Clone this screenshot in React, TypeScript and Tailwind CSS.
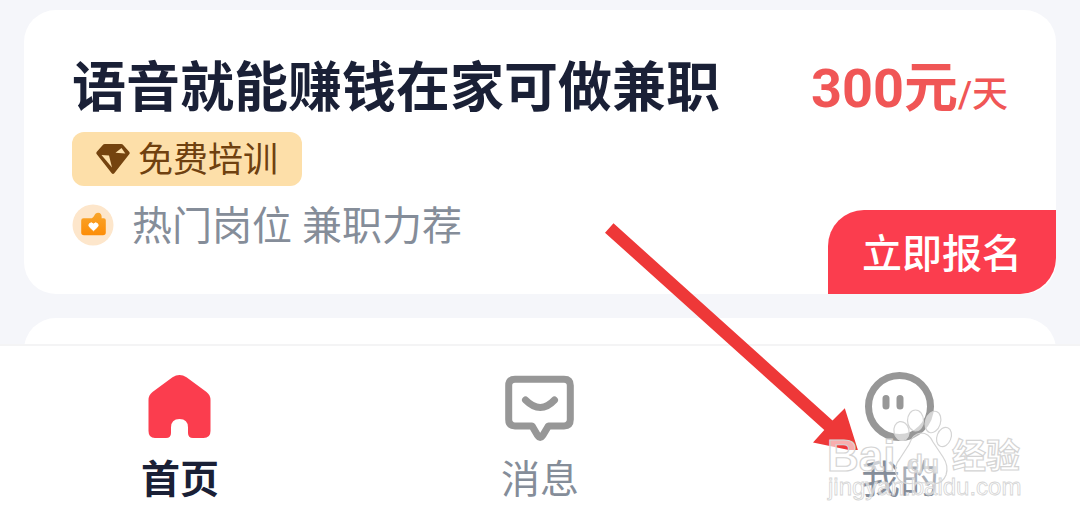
import type { ReactNode } from 'react';
import { clsx } from 'clsx';

const DiamondIcon = () => (
  <svg viewBox="0 0 34 32" className="w-[34px] h-8 shrink-0" aria-hidden="true">
    <path d="M9 1h16q1.500 0 2.400 1.200l5.800 6.500q1 1.300 0 2.600L18.300 30.200q-1.300 1.500-2.600 0L.8 11.300q-1-1.300 0-2.600l5.800-6.500Q7.500 1 9 1z" fill="#74430f" />
    <path d="M5.500 12l7.500.5 3 12z" fill="#fddfa9" />
    <path d="M19.500 9.800l6-4.800 3.800 5.500z" fill="#fddfa9" />
  </svg>
);

const ThumbIcon = () => (
  <svg viewBox="0 0 42 42" className="w-[42px] h-[42px] shrink-0" aria-hidden="true">
    <defs>
      <linearGradient id="thumb" x1="0" y1="0" x2="0" y2="1">
        <stop offset="0" stopColor="#f8a52c" />
        <stop offset="1" stopColor="#fd8d07" />
      </linearGradient>
    </defs>
    <circle cx="21" cy="21" r="20.500" fill="#fde6cb" />
    <path d="M11.500 14.200h8.300q1.400-.6 2.400-2.500 1.200-3 3.900-3 3.600.2 3.600 4.600l-.2.900h2.300q2 0 2 2V28.500q0 2.800-2.800 2.800H12q-2.800 0-2.800-2.800V16.500q0-2.300 2.300-2.300z" fill="url(#thumb)" />
    <path d="M21.500 26.700l-4-3.800q-1.300-1.700-.1-3.200 2-1.900 4.100.3 2.100-2.200 4.100-.3 1.200 1.500-.1 3.200z" fill="#fff" stroke="#fff" strokeLinejoin="round" />
  </svg>
);

const HomeIcon = () => (
  <svg viewBox="0 0 72 72" className="w-[72px] h-[72px]" aria-hidden="true">
    <path
      d="M28.500 7.200q7-4.600 14 0L62.500 22q4 3.200 4 8v31q0 7-7 7H49q-5 0-5-5v-5.500q0-8.500-8.500-8.500t-8.500 8.500V63q0 5-5 5H11q-6.500 0-6.500-7V30q0-5 4-8z"
      fill="#fb3d4e"
    />
  </svg>
);

const MessageIcon = () => (
  <svg viewBox="0 0 72 72" className="w-[72px] h-[72px]" fill="none" stroke="#979797" strokeWidth="7" strokeLinecap="round" strokeLinejoin="round" aria-hidden="true">
    <path d="M11 9.300h49q6.300 0 6.300 6.300v34q0 6.300-6.300 6.300H44.500l-5.700 9.500q-2.600 4-5.200 0L28 55.900H11q-6.300 0-6.300-6.300v-34q0-6.300 6.300-6.300z" />
    <path d="M21.500 30q15 15 29 0" />
  </svg>
);

const MineIcon = () => (
  <svg viewBox="0 0 72 72" className="w-[72px] h-[72px]" fill="none" stroke="#979797" strokeWidth="7" strokeLinecap="round" aria-hidden="true">
    <circle cx="35.500" cy="36.500" r="31" />
    <path d="M22 28.500v7.500M36 28.500v7.500" />
  </svg>
);

const tabs: { label: string; icon: ReactNode; active?: boolean }[] = [
  { label: '首页', icon: <HomeIcon />, active: true },
  { label: '消息', icon: <MessageIcon /> },
  { label: '我的', icon: <MineIcon /> },
];

const JobCard = () => (
  <article className="relative bg-white rounded-[32px] overflow-hidden h-[284px] px-12 pt-10">
    <div className="flex justify-between items-center h-[76px]">
      <h2 className="text-[54px] font-bold text-[#1a2036]">语音就能赚钱在家可做兼职</h2>
      <p className="flex items-baseline font-bold text-[#f05656]">
        <span className="text-[54px]">300元</span>
        <span className="text-4xl font-medium">/天</span>
      </p>
    </div>
    <div className="mt-1.5 flex w-fit items-center gap-2 h-[54px] px-6 rounded-xl bg-[#fddfa9] text-[35px] text-[#6f4110]">
      <DiamondIcon />
      <span className="pt-1">免费培训</span>
    </div>
    <div className="mt-3 flex items-center gap-[18px] h-[54px] text-[40px] text-[#858d99]">
      <ThumbIcon />
      <span className="pt-1">热门岗位 兼职力荐</span>
    </div>
    <button className="absolute right-0 bottom-0 w-[228px] h-[84px] pt-1.5 rounded-tl-[36px] rounded-br-[36px] bg-[#fb3d4e] text-[40px] font-medium text-white">
      立即报名
    </button>
  </article>
);

const Arrow = () => (
  <svg viewBox="0 0 260 230" className="absolute left-[600px] top-[220px] w-[260px] h-[230px] pointer-events-none" aria-hidden="true">
    <path d="M13.500 3.300L232.500 200.500l12.300-12.300L258.500 232l-45.500-9.500 11.300-12.500L5 12.700z" fill="#ee3838" />
  </svg>
);

const Watermark = () => (
  <svg viewBox="0 0 210 100" className="absolute left-[820px] top-[405px] w-[210px] h-[100px] pointer-events-none" aria-hidden="true">
    <g fill="#fff" fillOpacity="0.6" stroke="#d4d4d4" strokeWidth="1.200">
      <text x="7" y="66" fontSize="44" fontWeight="700" fontFamily="Liberation Sans, sans-serif">Bai</text>
      <ellipse cx="81.500" cy="26" rx="7.500" ry="9.500" transform="rotate(-12 81.500 26)" />
      <ellipse cx="95.500" cy="15.500" rx="8" ry="10.500" />
      <ellipse cx="113" cy="17" rx="7.500" ry="11" transform="rotate(18 113 17)" />
      <ellipse cx="124" cy="32" rx="7" ry="10" transform="rotate(22 124 32)" />
      <path d="M101 28q8 0 12 9l10 15q6 9 3 18-4 10-14 8.500-10-1.500-20 0-12 1-15-7-4-10 3-18l9-14q4-11 12-11.500z" fillOpacity="0.3" />
      <text x="87" y="68" fontSize="26" fontWeight="700" fontFamily="Liberation Sans, sans-serif">du</text>
      <text x="132" y="63" fontSize="34" fontWeight="700" fontFamily="Noto Sans CJK SC, sans-serif">经验</text>
      <text x="8" y="90" fontSize="24" strokeWidth="0.800" fontFamily="Liberation Sans, sans-serif">jingyan.baidu.com</text>
    </g>
  </svg>
);

export default function App() {
  return (
    <div className="relative flex flex-col h-screen overflow-hidden bg-[#f5f6fa] font-['Roboto','Noto_Sans_CJK_SC',sans-serif]">
      <main className="flex-1 min-h-0 overflow-hidden px-6 pt-2.5 space-y-6">
        <JobCard />
        <div className="h-[284px] rounded-[32px] bg-white" />
      </main>
      <nav className="grid grid-cols-3 h-[181px] shrink-0 border-t-2 border-[#f4f4f5] bg-white pt-6">
        {tabs.map((tab) => (
          <a
            key={tab.label}
            href="#"
            className={clsx(
              'flex flex-col items-center gap-1.5 text-[39px] leading-[64px]',
              tab.active ? 'font-bold text-[#1a2036]' : 'text-[#858d99]'
            )}
          >
            {tab.icon}
            {tab.label}
          </a>
        ))}
      </nav>
      <Arrow />
      <Watermark />
    </div>
  );
}
